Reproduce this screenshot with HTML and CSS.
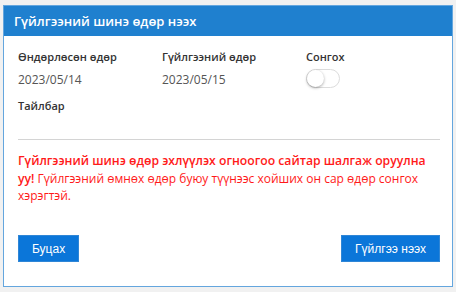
FILE: index.html
```html
<!DOCTYPE html>
<html lang="mn">
<head>
  <meta charset="UTF-8" />
  <meta name="viewport" content="width=device-width, initial-scale=1.0" />
  <title>Гүйлгээний шинэ өдөр нээх</title>
  <link rel="stylesheet" href="styles.css">
</head>
<body>
  <section class="modal">
    <header class="modal-header">
      <h1>Гүйлгээний шинэ өдөр нээх</h1>
    </header>

    <div class="modal-body">
      <div class="fields">
        <div class="field">
          <span class="field-label">Өндөрлөсөн өдөр</span>
          <span class="field-value">2023/05/14</span>
        </div>
        <div class="field">
          <span class="field-label">Гүйлгээний өдөр</span>
          <span class="field-value">2023/05/15</span>
        </div>
        <div class="field">
          <span class="field-label">Сонгох</span>
          <label class="switch">
            <input type="checkbox" />
            <span class="knob"></span>
          </label>
        </div>
      </div>

      <div class="note">
        <span class="field-label">Тайлбар</span>
      </div>

      <p class="warning">
        <strong>Гүйлгээний шинэ өдөр эхлүүлэх огноогоо сайтар шалгаж оруулна уу!</strong>
        Гүйлгээний өмнөх өдөр буюу түүнээс хойших он сар өдөр сонгох хэрэгтэй.
      </p>

      <div class="actions">
        <button type="button" class="btn">Буцах</button>
        <button type="button" class="btn">Гүйлгээ нээх</button>
      </div>
    </div>
  </section>
</body>
</html>
```

FILE: styles.css
```css
:root {
  --header-blue: #1f80cf;
  --button-blue: #0b76d9;
  --border-blue: #64a6de;
  --page-bg: #f1f1f1;
  --label-color: #333333;
  --value-color: #555555;
  --warn-color: #ff1a1a;
}

* {
  box-sizing: border-box;
  margin: 0;
  padding: 0;
}

body {
  background-color: var(--page-bg);
  font-family: "Open Sans", "Noto Sans", sans-serif;
  padding: 5px 3px;
}

.modal {
  background-color: #fff;
  border: 1px solid var(--border-blue);
  height: 282px;
  display: flex;
  flex-direction: column;
}

.modal-header {
  background-color: var(--header-blue);
  height: 30px;
  padding: 0 10px;
  display: flex;
  align-items: center;
}

.modal-header h1 {
  color: #fff;
  font-size: 13px;
  font-weight: 600;
  line-height: 1;
}

.modal-body {
  flex: 1;
  padding: 13px 12px 0 14px;
  display: flex;
  flex-direction: column;
}

.fields {
  display: grid;
  grid-template-columns: 144px 144px 1fr;
}

.field {
  display: flex;
  flex-direction: column;
}

.field-label {
  display: block;
  font-size: 11px;
  font-weight: 600;
  line-height: 16px;
  color: var(--label-color);
}

.field-value {
  font-size: 12px;
  line-height: 16px;
  color: var(--value-color);
  margin-top: 7px;
}

.switch {
  position: relative;
  display: block;
  width: 34px;
  height: 19px;
  margin-top: 4px;
}

.switch input {
  display: none;
}

.knob {
  display: block;
  width: 100%;
  height: 100%;
  border: 1px solid #dcdcdc;
  border-radius: 10px;
  background-color: #fff;
}

.knob::before {
  content: "";
  position: absolute;
  left: 1px;
  top: 1px;
  width: 17px;
  height: 17px;
  border-radius: 50%;
  background-color: #fff;
  box-shadow: 0 1px 3px rgba(0, 0, 0, 0.35);
}

.note {
  margin-top: 10px;
  padding-bottom: 25px;
  border-bottom: 1px solid #d4d4d4;
}

.warning {
  margin-top: 12px;
  font-size: 12px;
  line-height: 17.5px;
  color: var(--warn-color);
}

.warning strong {
  font-size: 12.2px;
  font-weight: 600;
}

.actions {
  margin-top: auto;
  margin-bottom: 24px;
  display: flex;
  justify-content: space-between;
}

.btn {
  background-color: var(--button-blue);
  color: #fff;
  border: 1px solid #2f86d6;
  font-family: "Liberation Sans", Arial, sans-serif;
  font-size: 12px;
  height: 27px;
  padding: 0 13px;
  cursor: pointer;
}
```
